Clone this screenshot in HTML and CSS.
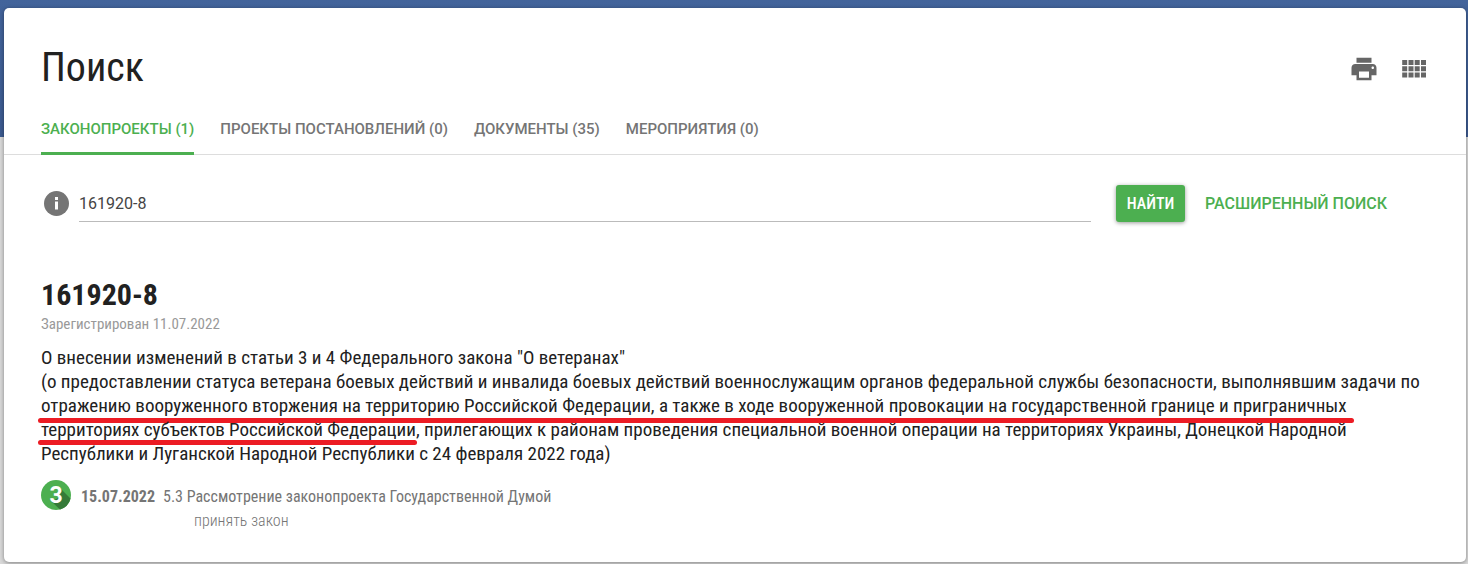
FILE: index.html
```html
<!DOCTYPE html>
<html lang="ru">
<head>
  <meta charset="UTF-8">
  <meta name="viewport" content="width=device-width, initial-scale=1">
  <title>Поиск</title>
  <link rel="stylesheet" href="styles.css">
</head>
<body>
  <main class="card">
    <header class="header">
      <h1>Поиск</h1>
      <div class="tools">
        <button type="button" class="icon-btn" aria-label="Печать">
          <svg width="30" height="30" viewBox="0 0 24 24"><path d="M19 8H5c-1.660 0-3 1.340-3 3v6h4v4h12v-4h4v-6c0-1.660-1.340-3-3-3zm-3 11H8v-5h8v5zm3-7c-.55 0-1-.45-1-1s.45-1 1-1 1 .45 1 1-.45 1-1 1zm-1-9H6v4h12V3z"/></svg>
        </button>
        <button type="button" class="icon-btn" aria-label="Меню">
          <svg width="30" height="30" viewBox="0 0 30 30"><path d="M3.200 6h5v5h-5zM9.500 6h5v5h-5zM15.700 6h5v5h-5zM22 6h5v5h-5zM3.200 12.200h5v5h-5zM9.500 12.200h5v5h-5zM15.700 12.200h5v5h-5zM22 12.200h5v5h-5zM3.200 18.500h5v5h-5zM9.500 18.500h5v5h-5zM15.700 18.500h5v5h-5zM22 18.500h5v5h-5z"/></svg>
        </button>
      </div>
    </header>

    <nav class="tabs">
      <a href="#bills" class="tab active">Законопроекты (1)</a>
      <a href="#resolutions" class="tab">Проекты постановлений (0)</a>
      <a href="#documents" class="tab">Документы (35)</a>
      <a href="#events" class="tab">Мероприятия (0)</a>
    </nav>

    <form class="search">
      <svg class="info" width="25" height="25" viewBox="0 0 25 25"><circle cx="12.500" cy="12.500" r="12.500"/><path fill="#fff" d="M11 6h3v3h-3zM11 10.500h3v8h-3z"/></svg>
      <input type="text" class="search-input" aria-label="Номер законопроекта" value="161920-8">
      <button type="submit" class="btn">Найти</button>
      <a href="#advanced" class="advanced">Расширенный поиск</a>
    </form>

    <article class="bill">
      <h2>161920-8</h2>
      <div class="registered">Зарегистрирован 11.07.2022</div>
      <p class="description">
        О внесении изменений в статьи 3 и 4 Федерального закона "О ветеранах"<br>
        (о предоставлении статуса ветерана боевых действий и инвалида боевых действий военнослужащим органов федеральной службы безопасности, выполнявшим задачи по<br>
        <span class="marked marked-wide">отражению вооруженного вторжения на территорию Российской Федерации, а также в ходе вооруженной провокации на государственной границе и приграничных</span><br>
        <span class="marked">территориях субъектов Российской Федерации</span>, прилегающих к районам проведения специальной военной операции на территориях Украины, Донецкой Народной<br>
        Республики и Луганской Народной Республики с 24 февраля 2022 года)
      </p>
      <div class="stage">
        <svg class="stage-badge" width="30" height="30" viewBox="0 0 30 30">
          <circle cx="15" cy="15" r="15" fill="#4caf50"/>
          <path d="M19 8L29.500 18.500A15 15 0 0 1 19 29.500L10.500 21.500L17 18z" fill="#357a38"/>
          <text x="15" y="23" text-anchor="middle">3</text>
        </svg>
        <div>
          <div class="stage-event"><time class="stage-date" datetime="2022-07-15">15.07.2022</time><span>5.3 Рассмотрение законопроекта Государственной Думой</span></div>
          <div class="stage-result">принять закон</div>
        </div>
      </div>
    </article>
  </main>
</body>
</html>
```
FILE: styles.css
```css
* {
  box-sizing: border-box;
}

html {
  background: #d9d9d9 linear-gradient(#43649b, #3c5a90) no-repeat;
  background-size: 100% 137px;
}

body {
  margin: 0;
  padding: 8px 2px 2px 4px;
  font-family: "Roboto Condensed", Roboto, sans-serif;
  color: #212121;
}

.card {
  background-color: #fff;
  border-radius: 5px;
  box-shadow: 0 1px 4px rgba(0, 0, 0, 0.4);
  padding-bottom: 29px;
}

.header {
  display: flex;
  justify-content: space-between;
  align-items: center;
  padding: 36px 37px 0;
}

h1 {
  margin: 0;
  font-size: 40px;
  line-height: 48px;
  font-weight: 400;
}

.tools {
  display: flex;
  gap: 20px;
  padding-top: 2px;
}

.icon-btn {
  width: 30px;
  height: 30px;
  padding: 0;
  border: none;
  background: none;
  fill: #666;
  cursor: pointer;
}

.tabs {
  display: flex;
  gap: 26px;
  height: 63px;
  padding: 0 37px;
  border-bottom: 1px solid #ddd;
}

.tab {
  height: 63px;
  padding-top: 26px;
  border-bottom: 3px solid transparent;
  font: 500 15px/22px Roboto, sans-serif;
  color: #757575;
  text-transform: uppercase;
  text-decoration: none;
  white-space: nowrap;
}

.tab.active {
  color: #4caf50;
  border-bottom-color: #4caf50;
}

.search {
  display: flex;
  align-items: center;
  padding: 30px 79px 0 40px;
}

.info {
  flex: none;
  fill: #757575;
  margin-right: 10px;
}

.search-input {
  flex: 1;
  min-width: 0;
  height: 37px;
  padding: 0;
  border: none;
  border-bottom: 1px solid #bbb;
  outline: none;
  font: 16px/22px Roboto, sans-serif;
  color: #444;
}

.btn {
  min-width: 69px;
  height: 37px;
  margin: 0 20px 0 25px;
  padding: 0 10px;
  border: none;
  border-radius: 3px;
  background-color: #4caf50;
  box-shadow: 0 1px 4px rgba(0, 0, 0, 0.4);
  color: #fff;
  font: 500 16px/24px "Roboto Condensed", Roboto, sans-serif;
  text-transform: uppercase;
  cursor: pointer;
}

.advanced {
  color: #4caf50;
  font: 500 16px/24px Roboto, sans-serif;
  text-transform: uppercase;
  text-decoration: none;
}

.bill {
  padding: 56px 37px 0;
}

h2 {
  margin: 0;
  font-size: 30px;
  line-height: 34px;
  font-weight: 700;
}

.registered {
  font-size: 15px;
  line-height: 24px;
  color: #999;
}

.description {
  margin: 10px 0 14px;
  font-size: 19px;
  line-height: 24px;
  white-space: nowrap;
}

/* red marker line under the phrase */
.marked {
  position: relative;
}

.marked::after {
  content: "";
  position: absolute;
  left: -3px;
  right: -1px;
  bottom: -4px;
  height: 5px;
  border-radius: 3px;
  background-color: #ec1c24;
}

.marked-wide::after {
  right: -7px;
  bottom: -6px;
}

.stage {
  display: flex;
  gap: 10px;
  font-size: 16px;
  line-height: 24px;
  color: #757575;
}

.stage-badge {
  flex: none;
}

.stage-badge text {
  fill: #fff;
  font: 700 23px Roboto, sans-serif;
}

.stage-event {
  padding-top: 5px;
}

.stage-date {
  margin-right: 8px;
  font-weight: 700;
}

.stage-result {
  padding-left: 113px;
  font-weight: 300;
}
```
